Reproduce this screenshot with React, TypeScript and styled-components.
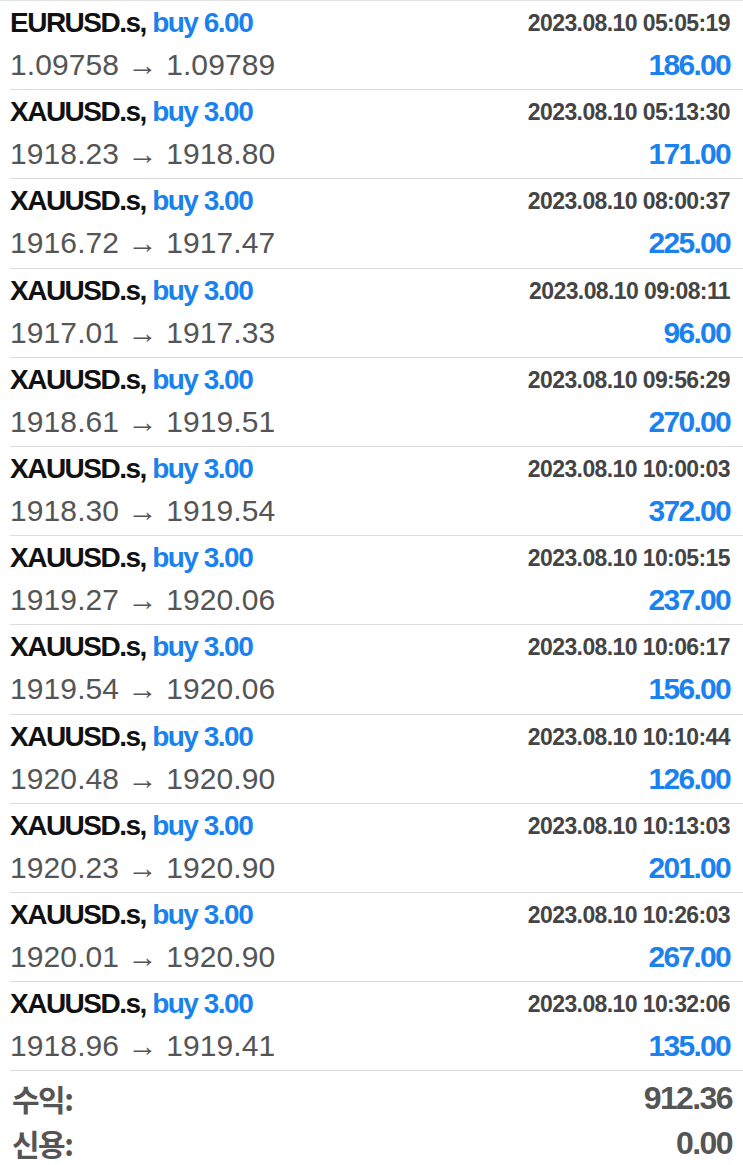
import React from "react";
import styled, { createGlobalStyle } from "styled-components";

const Global = createGlobalStyle`
  html, body { margin: 0; padding: 0; background: #fff; }
  body { font-family: "Liberation Sans", Arial, sans-serif; }
`;

const Page = styled.div`
  width: 743px;
  height: 1165px;
  overflow: hidden;
  background: #fff;
  border-top: 1px solid #e2e2e2;
  box-sizing: border-box;
`;

const Row = styled.div`
  display: grid;
  grid-template-columns: 1fr auto;
  grid-template-rows: 44px 40px;
  height: 89.2px;
  box-sizing: border-box;
  margin-left: 10px;
  padding-right: 13px;
  border-bottom: 1px solid #dcdcdc;
  white-space: nowrap;
`;

const Title = styled.div`
  font-size: 28px;
  line-height: 44px;
  font-weight: 700;
  letter-spacing: -1.5px;
  color: #111;
`;

const Buy = styled.span`
  color: #1a82ee;
`;

const Prices = styled.div`
  font-size: 30px;
  line-height: 40px;
  color: #555;
  letter-spacing: 0.1px;
`;

const Time = styled.div`
  font-size: 23px;
  line-height: 44px;
  font-weight: 700;
  letter-spacing: -0.6px;
  color: #444;
  text-align: right;
`;

const Profit = styled.div`
  font-size: 30px;
  line-height: 40px;
  font-weight: 700;
  letter-spacing: -1.7px;
  color: #1a82ee;
  text-align: right;
`;

const Summary = styled.div`
  display: grid;
  grid-template-columns: 1fr auto;
  padding: 5px 11px 0 12px;
  font-weight: 700;
  color: #555;
  line-height: 45px;
`;

const Label = styled.div`
  font-family: "Noto Sans CJK KR", sans-serif;
  font-size: 30px;
  letter-spacing: -1.5px;
`;

const Value = styled.div`
  font-size: 32px;
  letter-spacing: -1.6px;
  text-align: right;
`;

const trades = [
  ["EURUSD.s", "6.00", "1.09758", "1.09789", "2023.08.10 05:05:19", "186.00"],
  ["XAUUSD.s", "3.00", "1918.23", "1918.80", "2023.08.10 05:13:30", "171.00"],
  ["XAUUSD.s", "3.00", "1916.72", "1917.47", "2023.08.10 08:00:37", "225.00"],
  ["XAUUSD.s", "3.00", "1917.01", "1917.33", "2023.08.10 09:08:11", "96.00"],
  ["XAUUSD.s", "3.00", "1918.61", "1919.51", "2023.08.10 09:56:29", "270.00"],
  ["XAUUSD.s", "3.00", "1918.30", "1919.54", "2023.08.10 10:00:03", "372.00"],
  ["XAUUSD.s", "3.00", "1919.27", "1920.06", "2023.08.10 10:05:15", "237.00"],
  ["XAUUSD.s", "3.00", "1919.54", "1920.06", "2023.08.10 10:06:17", "156.00"],
  ["XAUUSD.s", "3.00", "1920.48", "1920.90", "2023.08.10 10:10:44", "126.00"],
  ["XAUUSD.s", "3.00", "1920.23", "1920.90", "2023.08.10 10:13:03", "201.00"],
  ["XAUUSD.s", "3.00", "1920.01", "1920.90", "2023.08.10 10:26:03", "267.00"],
  ["XAUUSD.s", "3.00", "1918.96", "1919.41", "2023.08.10 10:32:06", "135.00"],
];

export default function App() {
  return (
    <>
      <Global />
      <Page>
        {trades.map((t, i) => (
          <Row key={i}>
            <Title>
              {t[0]}, <Buy>buy {t[1]}</Buy>
            </Title>
            <Time>{t[4]}</Time>
            <Prices>
              {t[2]} → {t[3]}
            </Prices>
            <Profit>{t[5]}</Profit>
          </Row>
        ))}
        <Summary>
          <Label>수익:</Label>
          <Value>912.36</Value>
          <Label>신용:</Label>
          <Value>0.00</Value>
        </Summary>
      </Page>
    </>
  );
}
